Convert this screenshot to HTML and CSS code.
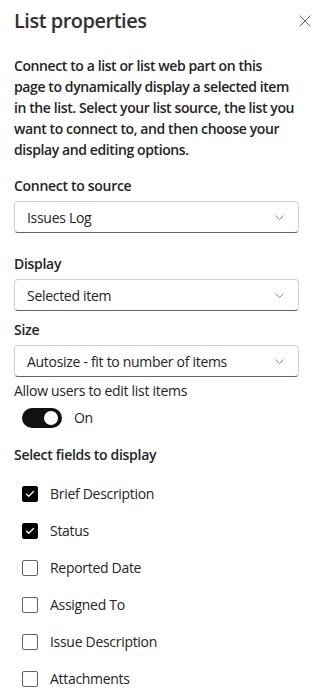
FILE: index.html
```html
<!DOCTYPE html>
<html lang="en">
<head>
<meta charset="utf-8">
<title>List properties</title>
<link rel="stylesheet" href="styles.css">
</head>
<body>
<div class="panel">
  <header class="panel-header">
    <h1 class="panel-title">List properties</h1>
    <button class="close-btn" aria-label="Close">
      <svg width="12" height="12" viewBox="0 0 12 12"><path d="M0.5 0.5 L11.5 11.5 M11.5 0.5 L0.5 11.5" stroke="#616161" stroke-width="1" fill="none"/></svg>
    </button>
  </header>

  <p class="intro">Connect to a list or list web part on this<br>page to dynamically display a selected item<br>in the list. Select your list source, the list you<br>want to connect to, and then choose your<br>display and editing options.</p>

  <div class="field field-first">
    <div class="field-label">Connect to source</div>
    <div class="dropdown"><span>Issues Log</span><svg class="chev" width="9" height="5" viewBox="0 0 9 5"><path d="M0.5 0.5 L4.5 4.5 L8.5 0.5" stroke="#8a8886" stroke-width="1" fill="none"/></svg></div>
  </div>

  <div class="field field-second">
    <div class="field-label">Display</div>
    <div class="dropdown"><span>Selected item</span><svg class="chev" width="9" height="5" viewBox="0 0 9 5"><path d="M0.5 0.5 L4.5 4.5 L8.5 0.5" stroke="#8a8886" stroke-width="1" fill="none"/></svg></div>
  </div>

  <div class="field field-third">
    <div class="field-label">Size</div>
    <div class="dropdown"><span>Autosize - fit to number of items</span><svg class="chev" width="9" height="5" viewBox="0 0 9 5"><path d="M0.5 0.5 L4.5 4.5 L8.5 0.5" stroke="#8a8886" stroke-width="1" fill="none"/></svg></div>
  </div>

  <div class="toggle-field">
    <div class="toggle-label">Allow users to edit list items</div>
    <div class="toggle-row">
      <span class="switch"><span class="knob"></span></span>
      <span class="toggle-text">On</span>
    </div>
  </div>

  <div class="fields-section">
    <div class="field-label">Select fields to display</div>
    <ul class="checklist">
      <li class="check-row"><span class="box checked"><svg width="10" height="8" viewBox="0 0 10 8"><path d="M1.5 4.2 L3.8 6.3 L8.5 1.5" stroke="#fff" stroke-width="1.3" fill="none" stroke-linecap="round" stroke-linejoin="round"/></svg></span><span class="check-text">Brief Description</span></li>
      <li class="check-row"><span class="box checked"><svg width="10" height="8" viewBox="0 0 10 8"><path d="M1.5 4.2 L3.8 6.3 L8.5 1.5" stroke="#fff" stroke-width="1.3" fill="none" stroke-linecap="round" stroke-linejoin="round"/></svg></span><span class="check-text">Status</span></li>
      <li class="check-row"><span class="box"></span><span class="check-text">Reported Date</span></li>
      <li class="check-row"><span class="box"></span><span class="check-text">Assigned To</span></li>
      <li class="check-row"><span class="box"></span><span class="check-text">Issue Description</span></li>
      <li class="check-row"><span class="box"></span><span class="check-text">Attachments</span></li>
    </ul>
  </div>
</div>
</body>
</html>
```

FILE: styles.css
```css
* { box-sizing: border-box; }
html, body {
  margin: 0;
  padding: 0;
  background: #ffffff;
}
body {
  font-family: "Open Sans", "Noto Sans", "Liberation Sans", sans-serif;
  font-size: 14px;
  color: #242424;
  letter-spacing: -0.3px;
}
.panel {
  width: 317px;
  padding: 0 18px 0 14px;
}
.panel-header {
  display: flex;
  align-items: center;
  justify-content: space-between;
  height: 42px;
}
.panel-title {
  margin: 0;
  font-size: 20px;
  font-weight: 600;
  line-height: 28px;
  color: #323130;
  letter-spacing: -0.5px;
}
.close-btn {
  border: 0;
  background: none;
  padding: 0;
  margin-right: -12px;
  width: 12px;
  height: 12px;
  display: flex;
}
.intro {
  margin: 13px 0 0 0;
  font-weight: 600;
  line-height: 21px;
  color: #242424;
  white-space: nowrap;
  letter-spacing: -0.4px;
}
.field-label {
  font-weight: 600;
  line-height: 20px;
  color: #242424;
}
.field-first { margin-top: 16px; }
.field-second { margin-top: 21px; }
.field-third { margin-top: 9px; }
.dropdown {
  margin-top: 5px;
  height: 32px;
  width: 285px;
  border: 1px solid #d1d1d1;
  border-bottom-color: #616161;
  border-radius: 4px;
  display: flex;
  align-items: center;
  justify-content: space-between;
  padding: 0 14px 0 12px;
  color: #242424;
}
.chev { display: block; }
.toggle-field { margin-top: 4px; }
.toggle-label { line-height: 20px; color: #242424; }
.toggle-row {
  display: flex;
  align-items: center;
  margin-top: 7px;
  padding-left: 8px;
  gap: 12px;
}
.switch {
  width: 40px;
  height: 20px;
  border-radius: 10px;
  background: #111111;
  position: relative;
  display: block;
}
.knob {
  position: absolute;
  width: 14px;
  height: 14px;
  border-radius: 50%;
  background: #ffffff;
  top: 3px;
  right: 4px;
}
.toggle-text { line-height: 20px; color: #242424; }
.fields-section { margin-top: 17px; }
.checklist {
  list-style: none;
  margin: 0;
  padding: 0 0 0 8px;
}
.check-row {
  display: flex;
  align-items: center;
  height: 37px;
  gap: 12px;
}
.check-row:first-child { margin-top: 10px; }
.box {
  width: 16px;
  height: 16px;
  border: 1px solid #616161;
  border-radius: 2px;
  display: flex;
  align-items: center;
  justify-content: center;
  background: #fff;
}
.box.checked {
  background: #000000;
  border-color: #000000;
}
.check-text { color: #242424; line-height: 20px; }
```
